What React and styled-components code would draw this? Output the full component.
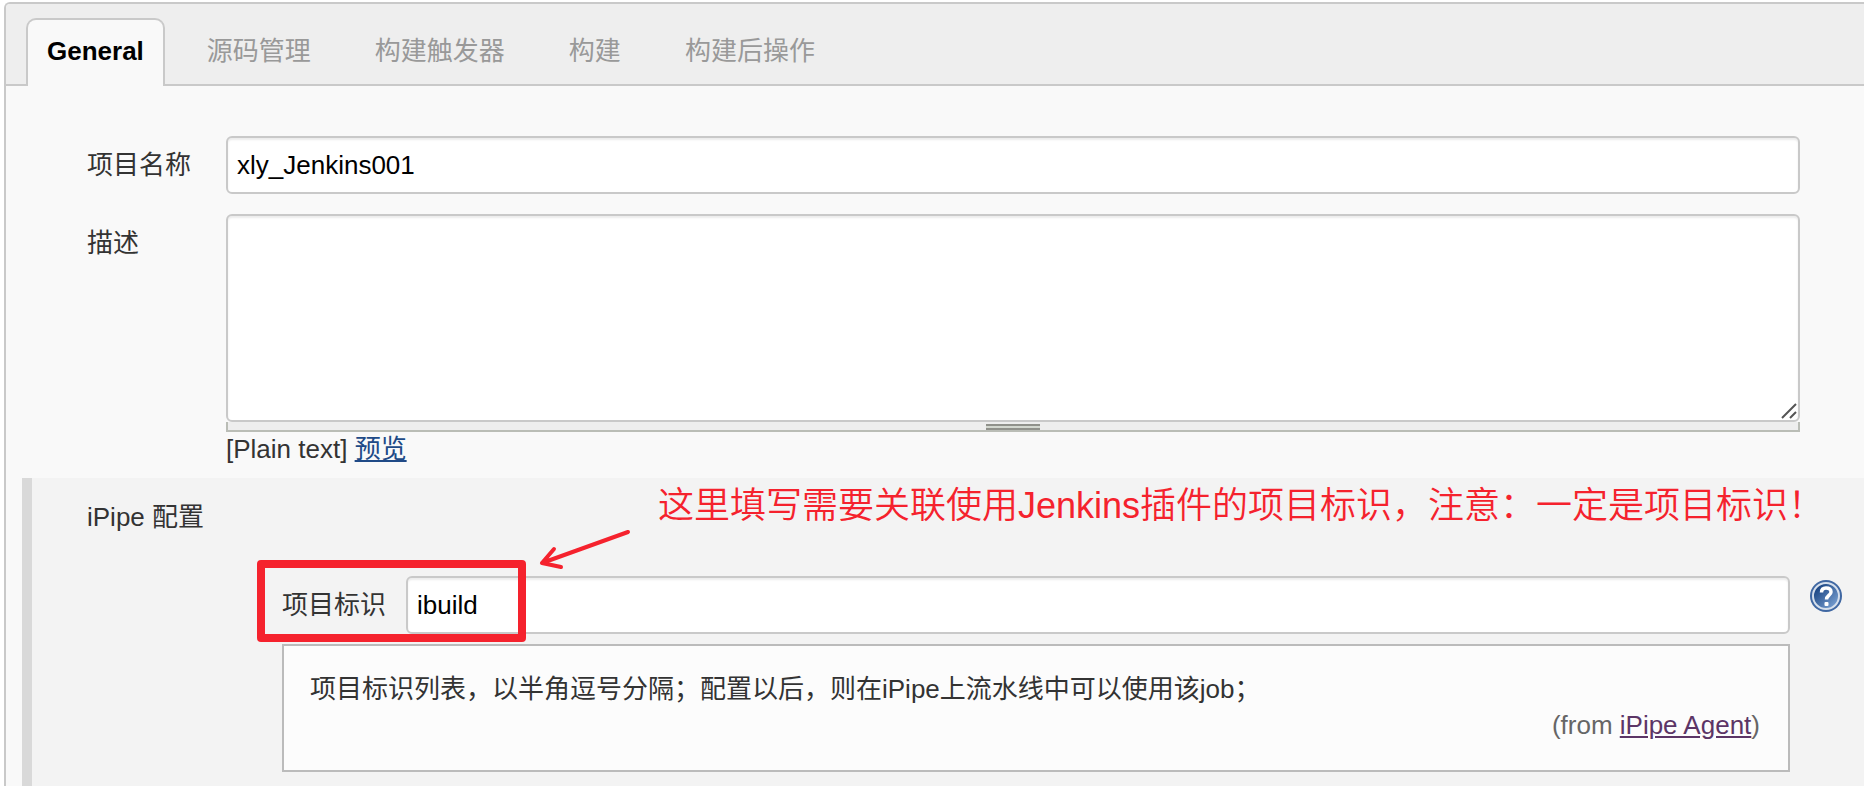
import React, {useState} from 'react';
import styled, {createGlobalStyle} from 'styled-components';

const GlobalStyle = createGlobalStyle`
  * {
    box-sizing: border-box;
  }

  body {
    margin: 0;
    background-color: #fff;
    color: #333;
    font: 26px/30px "Liberation Sans", "Noto Sans CJK SC", sans-serif;
  }
`;

const Panel = styled.main`
  min-height: calc(100vh - 2px);
  margin: 2px 0 0 4px;
  display: flex;
  flex-direction: column;
  border: 2px solid #c9c9c9;
  border-width: 2px 0 0 2px;
  border-top-left-radius: 6px;
  background-color: #f9f9f9;
  overflow: hidden;
`;

const TabBar = styled.nav`
  display: flex;
  gap: 20px;
  padding: 14px 20px 0;
  background-color: #eee;
  box-shadow: inset 0 -2px #c9c9c9;
`;

const Tab = styled.button`
  height: 68px;
  padding: 0 19px 4px;
  border: 2px solid ${({$active}) => ($active ? '#c9c9c9' : 'transparent')};
  border-bottom: none;
  border-radius: 10px 10px 0 0;
  background-color: ${({$active}) => ($active ? '#f9f9f9' : 'transparent')};
  color: ${({$active}) => ($active ? '#000' : '#999')};
  font: inherit;
  font-weight: ${({$active}) => ($active ? 'bold' : 'normal')};
  cursor: pointer;

  & + & {
    padding: 0 20px 4px;
  }
`;

const Form = styled.form`
  flex-grow: 1;
  display: flex;
  flex-direction: column;
`;

const Rows = styled.div`
  display: grid;
  gap: 20px;
  padding: 50px 64px 14px 81px;
`;

const Row = styled.div`
  display: grid;
  grid-template-columns: 139px 1fr;
`;

const Label = styled.label`
  padding-top: 14px;
`;

const TextInput = styled.input`
  width: 100%;
  height: 58px;
  padding: 0 9px;
  border: 2px solid #c9c9c9;
  border-radius: 6px;
  background-color: #fff;
  box-shadow: inset 0 2px 2px rgba(0, 0, 0, 0.08);
  color: #000;
  font: inherit;
  outline: none;
`;

const AreaWrap = styled.div`
  position: relative;
  display: flex;
`;

const TextArea = styled(TextInput).attrs({as: 'textarea'})`
  height: 208px;
  padding: 9px;
  resize: none;
`;

const Resizer = styled.svg`
  position: absolute;
  right: 3px;
  bottom: 3px;
`;

const Handle = styled.div`
  height: 10px;
  padding-top: 2px;
  border: 2px solid #babdb6;
  border-top: none;
  background-color: #eee;
`;

const Grip = styled.div`
  width: 54px;
  height: 6px;
  margin: 0 auto;
  border: 2px solid #90918b;
  border-width: 2px 0;
  background-color: #d3d7cf;
`;

const Markup = styled.div`
  padding-top: 2px;
`;

const Link = styled.a`
  color: ${({$visited}) => ($visited ? '#5c3566' : '#204a87')};
`;

const Section = styled.section`
  position: relative;
  flex-grow: 1;
  margin-left: 16px;
  padding: 24px 22px 14px 55px;
  border-left: 10px solid #d9d9d9;
  background-color: #f3f3f3;
`;

const SectionTitle = styled.h2`
  margin: 0 0 44px;
  font: inherit;
`;

const Field = styled.div`
  position: relative;
  display: grid;
  grid-template-columns: 124px 1fr 52px;
  padding-left: 195px;
`;

const HelpButton = styled.button`
  height: 32px;
  width: 32px;
  margin: 4px 0 0 20px;
  padding: 0;
  border: none;
  background: none;
  cursor: pointer;
`;

const Help = styled.div`
  margin: 10px 52px 0 195px;
  padding: 28px 28px 30px 26px;
  border: 2px solid #bbb;
  background-color: #fcfcfc;
`;

const HelpText = styled.p`
  margin: 0 0 6px;
`;

const From = styled.p`
  margin: 0;
  color: #666;
  text-align: right;
`;

const Highlight = styled.div`
  position: absolute;
  left: 170px;
  top: -16px;
  width: 269px;
  height: 82px;
  border: 8px solid #f5222d;
  border-radius: 4px;
  pointer-events: none;
`;

const Note = styled.p`
  position: absolute;
  top: 6px;
  left: 626px;
  margin: 0;
  color: #f5222d;
  font-size: 36px;
  font-weight: 350;
  line-height: 44px;
  white-space: nowrap;
`;

const Arrow = styled.svg`
  position: absolute;
  top: 50px;
  left: 502px;
`;

const tabs = ['General', '源码管理', '构建触发器', '构建', '构建后操作'];

const HelpIcon = () => (
  <svg width="32" height="32" viewBox="0 0 32 32">
    <defs>
      <linearGradient id="ball" x1="0" y1="0" x2="1" y2="1">
        <stop offset="0.2" stopColor="#204a87" />
        <stop offset="1" stopColor="#87aede" />
      </linearGradient>
    </defs>
    <circle cx="16" cy="16" r="16" fill="#3f67a2" />
    <circle cx="16" cy="16" r="13" fill="url(#ball)" stroke="#d5dfec" strokeWidth="2" />
    <path
      d="M11.5 12.5C11.5 9 13.5 8 16 8c3 0 5 1.500 5 4 0 3.500-4.500 3.500-4.500 7.500"
      fill="none"
      stroke="#fff"
      strokeWidth="3.500"
    />
    <rect x="14.500" y="22" width="4" height="4" rx="1" fill="#fff" />
  </svg>
);

export default function App() {
  const [active, setActive] = useState('General');

  return (
    <>
      <GlobalStyle />
      <Panel>
        <TabBar>
          {tabs.map(tab => (
            <Tab key={tab} type="button" $active={tab === active} onClick={() => setActive(tab)}>
              {tab}
            </Tab>
          ))}
        </TabBar>
        <Form>
          <Rows>
            <Row>
              <Label htmlFor="name">项目名称</Label>
              <TextInput id="name" defaultValue="xly_Jenkins001" />
            </Row>
            <Row>
              <Label htmlFor="description">描述</Label>
              <div>
                <AreaWrap>
                  <TextArea id="description" />
                  <Resizer width="16" height="16" viewBox="0 0 16 16" stroke="#555" strokeWidth="2">
                    <path d="M1 15L15 1M9 15l6-6" />
                  </Resizer>
                </AreaWrap>
                <Handle>
                  <Grip />
                </Handle>
                <Markup>
                  [Plain text] <Link href="#preview">预览</Link>
                </Markup>
              </div>
            </Row>
          </Rows>
          <Section>
            <SectionTitle>iPipe 配置</SectionTitle>
            <Field>
              <Label htmlFor="mark">项目标识</Label>
              <TextInput id="mark" defaultValue="ibuild" />
              <HelpButton type="button" aria-label="Help">
                <HelpIcon />
              </HelpButton>
              <Highlight />
            </Field>
            <Help>
              <HelpText>项目标识列表，以半角逗号分隔；配置以后，则在iPipe上流水线中可以使用该job；</HelpText>
              <From>
                (from <Link href="#agent" $visited>iPipe Agent</Link>)
              </From>
            </Help>
            <Note>这里填写需要关联使用Jenkins插件的项目标识，注意：一定是项目标识！</Note>
            <Arrow width="104" height="44" viewBox="0 0 104 44" fill="none" stroke="#f5222d" strokeWidth="4" strokeLinecap="round" strokeLinejoin="round">
              <path d="M94 4L8 35M20 21L8 35l19 4" />
            </Arrow>
          </Section>
        </Form>
      </Panel>
    </>
  );
}
